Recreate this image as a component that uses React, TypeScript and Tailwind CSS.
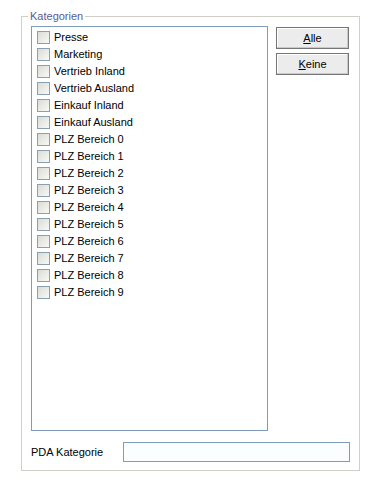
const items = [
  'Presse',
  'Marketing',
  'Vertrieb Inland',
  'Vertrieb Ausland',
  'Einkauf Inland',
  'Einkauf Ausland',
  'PLZ Bereich 0',
  'PLZ Bereich 1',
  'PLZ Bereich 2',
  'PLZ Bereich 3',
  'PLZ Bereich 4',
  'PLZ Bereich 5',
  'PLZ Bereich 6',
  'PLZ Bereich 7',
  'PLZ Bereich 8',
  'PLZ Bereich 9',
]

function CheckRow({ label }: { label: string }) {
  return (
    <div className="flex h-[17px] items-center gap-[4px]">
      <span className="h-[13px] w-[13px] shrink-0 border border-[#8a9fb4] bg-gradient-to-br from-[#dcdcd6] to-[#f8f8f6]" />
      <span className="whitespace-nowrap">{label}</span>
    </div>
  )
}

function XpButton({ first, rest }: { first: string; rest: string }) {
  return (
    <button
      type="button"
      className="flex h-[22px] w-[73px] items-center justify-center border border-[#767676] bg-[#ececec] text-black shadow-[inset_-1px_-1px_0_#c9c9c9,inset_1px_1px_0_#ffffff]"
    >
      <span className="underline underline-offset-1">{first}</span>
      {rest}
    </button>
  )
}

export default function App() {
  return (
    <div className="h-[491px] w-[380px] bg-white pl-[21px] pt-[16px] font-['Liberation_Sans',Arial,sans-serif] text-[11px] text-black">
      <div className="relative flex h-[455px] w-[339px] flex-col border border-[#d0d0c8] px-[9px] pt-[9px]">
        <span className="absolute -top-[8px] left-[6px] bg-white px-[2px] leading-[14px] text-[#5a5a98]">
          Kategorien
        </span>

        <div className="flex gap-[8px]">
          <div className="h-[405px] w-[237px] border border-[#7f9db9] bg-white pl-[5px] pt-[2px]">
            {items.map((it) => (
              <CheckRow key={it} label={it} />
            ))}
          </div>
          <div className="flex flex-col gap-[4px] pt-[1px]">
            <XpButton first="A" rest="lle" />
            <XpButton first="K" rest="eine" />
          </div>
        </div>

        <div className="mt-[11px] flex items-center">
          <span className="w-[92px] shrink-0">PDA Kategorie</span>
          <div className="h-[20px] w-[227px] border border-[#7f9db9] bg-[#fbfefe]" />
        </div>
      </div>
    </div>
  )
}
